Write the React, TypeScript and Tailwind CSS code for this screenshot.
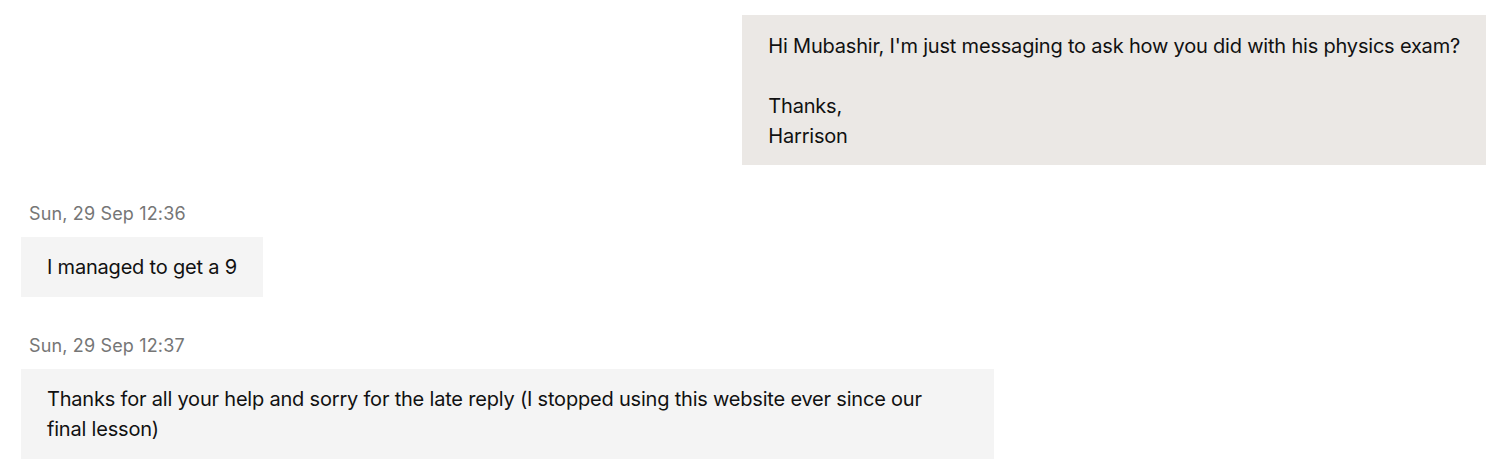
import React from "react";

const font = { fontFamily: "Inter, 'Liberation Sans', sans-serif" };

function Stamp({ text, right }: { text: string; right?: boolean }) {
  return (
    <div
      className={`h-[24px] leading-[24px] text-[18px] tracking-[0.15px] text-[#767676] ${right ? "self-end pr-[8px]" : "pl-[8px]"}`}
    >
      {text}
    </div>
  );
}

export default function App() {
  return (
    <div className="w-[1506px] h-[468px] overflow-hidden bg-white" style={font}>
      <div className="flex flex-col pl-[21px] pr-[20px] mt-[-22px]">
        <div className="flex flex-col items-end">
          <Stamp text="Sun, 29 Sep 12:35" right />
          <div className="mt-[13px] bg-[#ebe8e5] px-[26px] pt-[16px] pb-[14px] text-[20px] tracking-[-0.2px] leading-[30px] text-[#111]">
            <div>Hi Mubashir, I'm just messaging to ask how you did with his physics exam?</div>
            <div className="h-[30px]" />
            <div>Thanks,</div>
            <div>Harrison</div>
          </div>
        </div>

        <div className="mt-[37px] flex flex-col items-start">
          <Stamp text="Sun, 29 Sep 12:36" />
          <div className="mt-[11px] bg-[#f4f4f4] px-[26px] py-[15px] text-[20px] tracking-[-0.2px] leading-[30px] text-[#111]">
            I managed to get a 9
          </div>
        </div>

        <div className="mt-[37px] flex flex-col items-start">
          <Stamp text="Sun, 29 Sep 12:37" />
          <div className="mt-[11px] w-[973px] bg-[#f4f4f4] pl-[26px] pr-[50px] py-[15px] text-[20px] tracking-[-0.2px] leading-[30px] text-[#111]">
            Thanks for all your help and sorry for the late reply (I stopped using this website ever since our final lesson)
          </div>
        </div>
      </div>
    </div>
  );
}
